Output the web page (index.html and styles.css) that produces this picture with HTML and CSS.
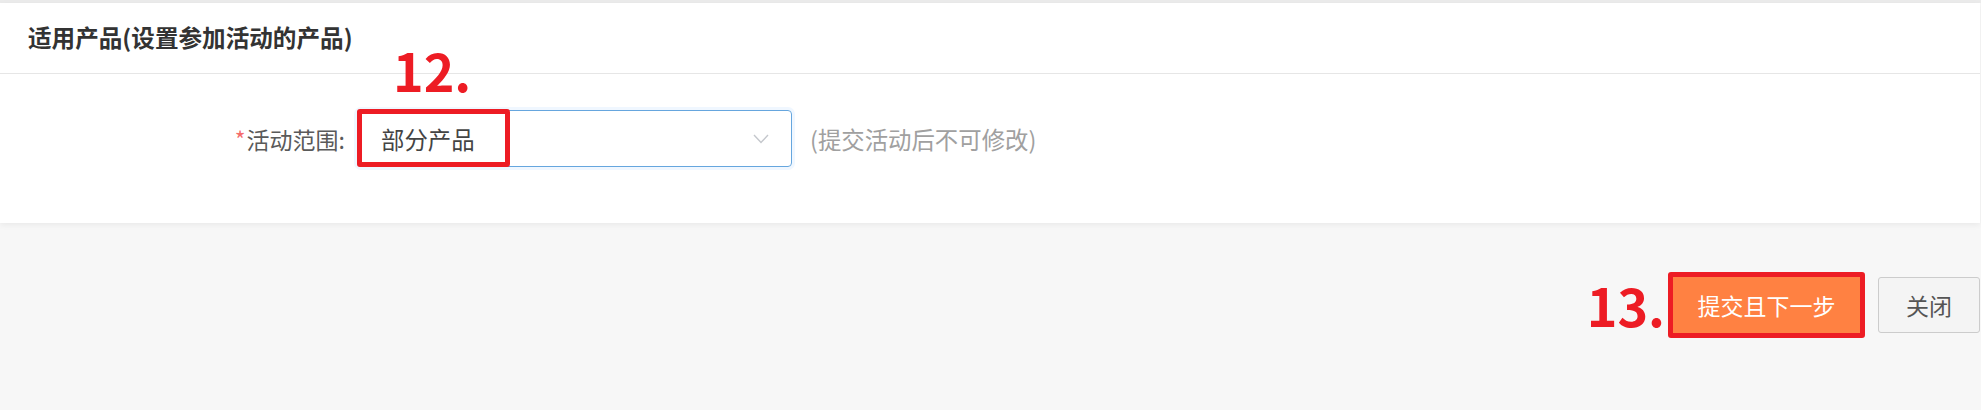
FILE: index.html
```html
<!DOCTYPE html>
<html lang="zh-CN">
<head>
  <meta charset="UTF-8">
  <meta name="viewport" content="width=device-width, initial-scale=1.0">
  <title>适用产品</title>
  <link rel="stylesheet" href="styles.css">
</head>
<body>
  <div class="page">
    <div class="card">
      <div class="card-head">适用产品(设置参加活动的产品)</div>
      <div class="card-body">
        <div class="form-row">
          <label class="form-label"><span class="req">*</span>活动范围:</label>
          <div class="select-wrap">
            <span class="step step-12">12.</span>
            <div class="select">
              <span class="select-value">部分产品</span>
              <svg class="select-arrow" width="16" height="10" viewBox="0 0 16 10">
                <polyline points="1,1 8,8.5 15,1" fill="none" stroke="#c4c7cc" stroke-width="1.4"/>
              </svg>
            </div>
            <div class="mark-box"></div>
          </div>
          <span class="form-tip">(提交活动后不可修改)</span>
        </div>
      </div>
    </div>
    <div class="footer">
      <span class="step">13.</span>
      <div class="mark">
        <button class="btn btn-primary">提交且下一步</button>
      </div>
      <button class="btn btn-default">关闭</button>
    </div>
  </div>
</body>
</html>
```

FILE: styles.css
```css
* {
  margin: 0;
  padding: 0;
  box-sizing: border-box;
}
body {
  background-color: #f7f7f7;
  font-family: "Noto Sans CJK SC", "Noto Sans", sans-serif;
  color: #333;
}
.page {
  border-top: 3px solid #ebebeb;
}
.card {
  background-color: #fff;
  margin-right: 1px;
  box-shadow: 0 2px 6px rgba(0, 0, 0, .06);
}
.card-head {
  height: 71px;
  display: flex;
  align-items: center;
  padding: 0 0 2px 28px;
  border-bottom: 1px solid #e6e6e6;
  font-size: 23.6px;
  font-weight: 700;
  color: #333;
}
.card-body {
  height: 149px;
  padding-top: 36px;
}
.form-row {
  display: flex;
  align-items: center;
  height: 57px;
}
.form-label {
  width: 357px;
  padding-right: 12px;
  text-align: right;
  font-size: 23px;
  color: #5a5a5a;
}
.req {
  color: #f56c6c;
  margin-right: 1px;
}
.select-wrap {
  position: relative;
}
.select {
  width: 435px;
  height: 57px;
  display: flex;
  align-items: center;
  justify-content: space-between;
  padding: 0 22px 0 23px;
  border: 1px solid #66a6de;
  border-radius: 4px;
  box-shadow: 0 0 0 3px rgba(64, 158, 255, .08);
  font-size: 23.4px;
  color: #444;
}
.mark-box {
  position: absolute;
  left: 0;
  top: -1px;
  width: 153px;
  height: 58px;
  border: 5px solid #ed1c24;
  border-radius: 3px;
}
.step {
  font-size: 52px;
  font-weight: 700;
  line-height: 1;
  color: #ed1c24;
}
.step-12 {
  position: absolute;
  left: 36px;
  top: -66px;
}
.form-tip {
  margin-left: 18px;
  font-size: 23.4px;
  color: #a0a0a0;
}
.footer {
  display: flex;
  justify-content: flex-end;
  align-items: center;
  padding: 49px 1px 0 0;
}
.footer .step {
  margin-right: 3px;
}
.mark {
  margin-right: 13px;
  border: 5px solid #ed1c24;
  border-radius: 3px;
}
.btn {
  font-family: inherit;
  font-size: 23px;
  border-radius: 3px;
  cursor: pointer;
}
.btn-primary {
  display: block;
  width: 187px;
  height: 56px;
  border: none;
  border-radius: 0;
  background-color: #ff8142;
  color: #fff;
}
.btn-default {
  width: 102px;
  height: 56px;
  border: 1px solid #ccc;
  background-color: #f4f4f4;
  color: #555;
}
```
